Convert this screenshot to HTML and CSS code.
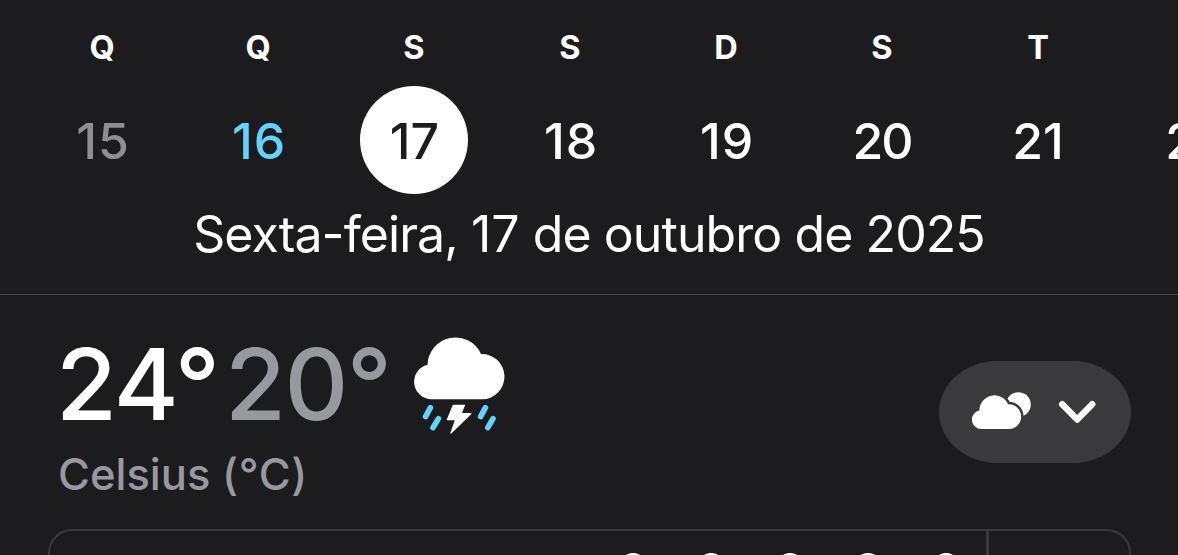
FILE: index.html
```html
<!DOCTYPE html>
<html lang="pt-BR">
<head>
    <meta charset="UTF-8">
    <meta name="viewport" content="width=device-width, initial-scale=1.0">
    <title>Tempo</title>
    <link rel="stylesheet" href="styles.css">
</head>
<body>
    <svg class="sprite" width="0" height="0">
        <symbol id="cloud" viewBox="14 13 91 61.3">
            <path d="M31.5 74.3A17.5 17.5 0 0 1 27.5 39.8A28 28 0 0 1 81 29A22.66 22.66 0 1 1 82.3 74.3Z"/>
        </symbol>
    </svg>

    <header class="calendar">
        <div class="week">
            <div class="day teens past"><span class="weekday">Q</span><span class="number">15</span></div>
            <div class="day teens today"><span class="weekday">Q</span><span class="number">16</span></div>
            <div class="day selected"><span class="weekday">S</span><span class="number">17</span></div>
            <div class="day teens"><span class="weekday">S</span><span class="number">18</span></div>
            <div class="day teens"><span class="weekday">D</span><span class="number">19</span></div>
            <div class="day twenties"><span class="weekday">S</span><span class="number">20</span></div>
            <div class="day"><span class="weekday">T</span><span class="number">21</span></div>
            <div class="day twenties"><span class="weekday"></span><span class="number">22</span></div>
        </div>
        <div class="full-date">Sexta-feira, <span class="date-day">17</span> de outubro de 2025</div>
    </header>

    <main class="weather">
        <div class="summary">
            <div class="temps">
                <div class="temp-row">
                    <span class="high">24°</span>
                    <span class="low">20°</span>
                    <svg class="storm" width="92" height="97" viewBox="14 13 92 97">
                        <path fill="#fff" d="M31.5 74.3A17.5 17.5 0 0 1 27.5 39.8A28 28 0 0 1 81 29A22.66 22.66 0 1 1 82.3 74.3Z"/>
                        <path class="drops" d="M30.4 82.6L25.6 91.6M38.4 93.6L33 102.6M85.4 82.6L80.6 91.6M93 93.6L87.8 102.6"/>
                        <path fill="#fff" d="M52.7 80Q53 79.7 53.5 79.7H65.3L62 88H71.2Q71.8 88.6 71.2 89.3L51.3 108.6Q50.3 109 50.3 108L54.8 95.2H47.3Q46.6 95 46.9 94.2Z"/>
                    </svg>
                </div>
                <div class="unit">Celsius <span class="symbol">(°C)</span></div>
            </div>
            <button class="picker">
                <svg width="192" height="102" viewBox="9 11 192 102">
                    <circle cx="88.4" cy="54.6" r="12.4" fill="#fff"/>
                    <path class="front-cloud" d="M51.5 79A9.4 9.4 0 0 1 49.4 60.4A15 15 0 0 1 78.1 54.2A12.4 12.4 0 0 1 79.3 79Z"/>
                    <path class="chevron" d="M132.2 54.2L147.2 69.6L162.2 54.2"/>
                </svg>
            </button>
        </div>

        <div class="chart">
            <div class="chart-icons">
                <svg><use href="#cloud"/></svg>
                <svg><use href="#cloud"/></svg>
                <svg><use href="#cloud"/></svg>
                <svg><use href="#cloud"/></svg>
                <svg><use href="#cloud"/></svg>
            </div>
            <div class="chart-scale"></div>
        </div>
    </main>
</body>
</html>
```
FILE: styles.css
```css
* {
    box-sizing: border-box;
}

body {
    margin: 0;
    height: 555px;
    overflow: hidden;
    background-color: #1c1c1e;
    color: #fff;
    font-family: Inter, "Liberation Sans", sans-serif;
}

.sprite {
    display: none;
}

.calendar {
    height: 295px;
    border-bottom: 1px solid #48484a;
}

.week {
    display: grid;
    grid-template-columns: repeat(8, 156px);
    padding: 27px 0 0 24px;
    overflow: hidden;
}

.day {
    display: flex;
    flex-direction: column;
    align-items: center;
}

.weekday {
    height: 41px;
    line-height: 41px;
    margin-bottom: 18px;
    font-size: 32.5px;
    font-weight: 700;
}

.number {
    width: 108px;
    height: 108px;
    padding-top: 1px;
    line-height: 108px;
    border-radius: 50%;
    text-align: center;
    font-size: 50px;
    font-weight: 500;
}

.teens .number {
    padding-left: 2px;
    letter-spacing: 1px;
}

.twenties .number {
    letter-spacing: -2px;
}

.past .number {
    color: #8e8e93;
}

.today .number {
    color: #64d2ff;
}

.selected .number {
    padding-left: 1px;
    background-color: #fff;
    color: #1c1c1e;
}

.full-date {
    line-height: 80px;
    text-align: center;
    font-size: 50px;
    letter-spacing: -0.92px;
}

.date-day {
    letter-spacing: 0;
}

.weather {
    padding: 39px 47px 0 48px;
}

.summary {
    display: flex;
    justify-content: space-between;
    height: 195px;
}

.temps {
    padding-left: 10px;
}

.temp-row {
    display: flex;
    height: 100px;
    margin-left: -2px;
    line-height: 100px;
    font-size: 99px;
    font-weight: 500;
    letter-spacing: -1.6px;
}

.high {
    width: 169px;
}

.low {
    width: 189px;
    color: #98989f;
}

.storm {
    margin-top: 4px;
    overflow: visible;
}

.unit {
    line-height: 81px;
    font-size: 43.5px;
    font-weight: 500;
    color: #98989f;
}

.symbol {
    letter-spacing: 0.7px;
}

.picker {
    width: 192px;
    height: 102px;
    margin-top: 27px;
    padding: 0;
    border: none;
    border-radius: 58px / 51px;
    background-color: #3a3a3c;
}

.picker svg {
    display: block;
}

.drops {
    fill: none;
    stroke: #64d2ff;
    stroke-width: 5.6;
    stroke-linecap: round;
}

.front-cloud {
    fill: #fff;
    stroke: #3a3a3c;
    stroke-width: 5;
    paint-order: stroke;
}

.chevron {
    fill: none;
    stroke: #fff;
    stroke-width: 6.4;
    stroke-linecap: round;
    stroke-linejoin: round;
}

.chart {
    display: flex;
    height: 26px;
    overflow: hidden;
    border: 2px solid #3a3a3c;
    border-bottom: none;
    border-radius: 24px 24px 0 0;
}

.chart-icons {
    display: flex;
    gap: 34.3px;
    width: 936px;
    padding: 22px 0 0 563px;
}

.chart-icons svg {
    flex: none;
    width: 44px;
    height: 30px;
    fill: #fff;
}

.chart-scale {
    flex: 1;
    border-left: 3px solid #3a3a3c;
}
```
